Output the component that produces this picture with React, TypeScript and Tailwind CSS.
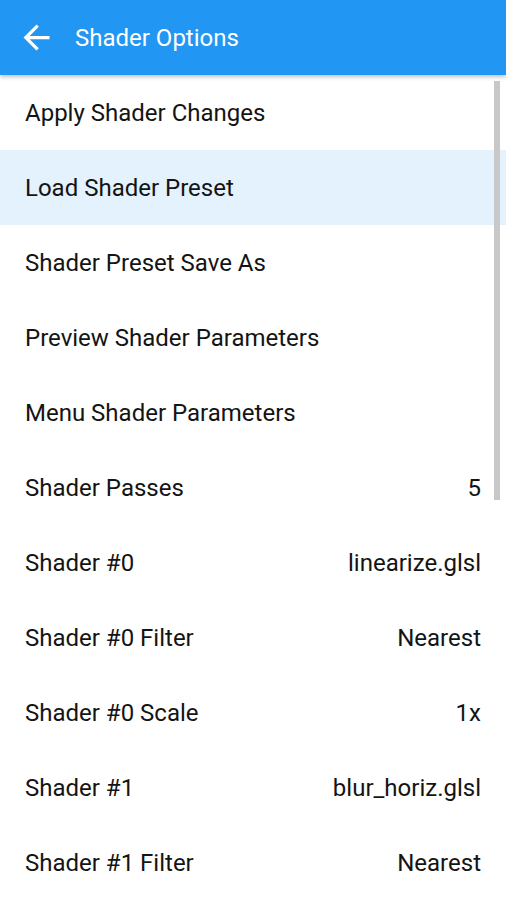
const ROWS: { label: string; value?: string; active?: boolean }[] = [
  { label: "Apply Shader Changes" },
  { label: "Load Shader Preset", active: true },
  { label: "Shader Preset Save As" },
  { label: "Preview Shader Parameters" },
  { label: "Menu Shader Parameters" },
  { label: "Shader Passes", value: "5" },
  { label: "Shader #0", value: "linearize.glsl" },
  { label: "Shader #0 Filter", value: "Nearest" },
  { label: "Shader #0 Scale", value: "1x" },
  { label: "Shader #1", value: "blur_horiz.glsl" },
  { label: "Shader #1 Filter", value: "Nearest" },
];

function BackArrow() {
  return (
    <svg width="39" height="39" viewBox="0 0 24 24" fill="#ffffff" aria-hidden>
      <path d="M20 11H7.83l5.59-5.59L12 4l-8 8 8 8 1.41-1.41L7.83 13H20v-2z" />
    </svg>
  );
}

export default function App() {
  return (
    <div
      className="relative h-[900px] w-[506px] overflow-hidden bg-white"
      style={{ fontFamily: "Roboto, 'Noto Sans', sans-serif" }}
    >
      {/* App bar */}
      <header className="relative z-10 flex h-[75px] items-center bg-[#2196f3] shadow-[0_2px_4px_rgba(0,0,0,0.25)]">
        <div className="ml-[17px] mr-[19px] flex h-[39px] w-[39px] items-center justify-center">
          <BackArrow />
        </div>
        <h1 className="pt-px text-[24px] font-normal text-white">Shader Options</h1>
      </header>

      {/* List */}
      <ul>
        {ROWS.map((row) => (
          <li
            key={row.label}
            className={`flex h-[75px] items-center justify-between px-[25px] text-[24px] text-[#141414] ${
              row.active ? "bg-[#e3f2fd]" : ""
            }`}
          >
            <span>{row.label}</span>
            {row.value && <span>{row.value}</span>}
          </li>
        ))}
      </ul>

      {/* Scrollbar thumb */}
      <div className="absolute left-[494px] top-[81px] h-[419px] w-[6px] bg-[#c8c8c8]" />
    </div>
  );
}
